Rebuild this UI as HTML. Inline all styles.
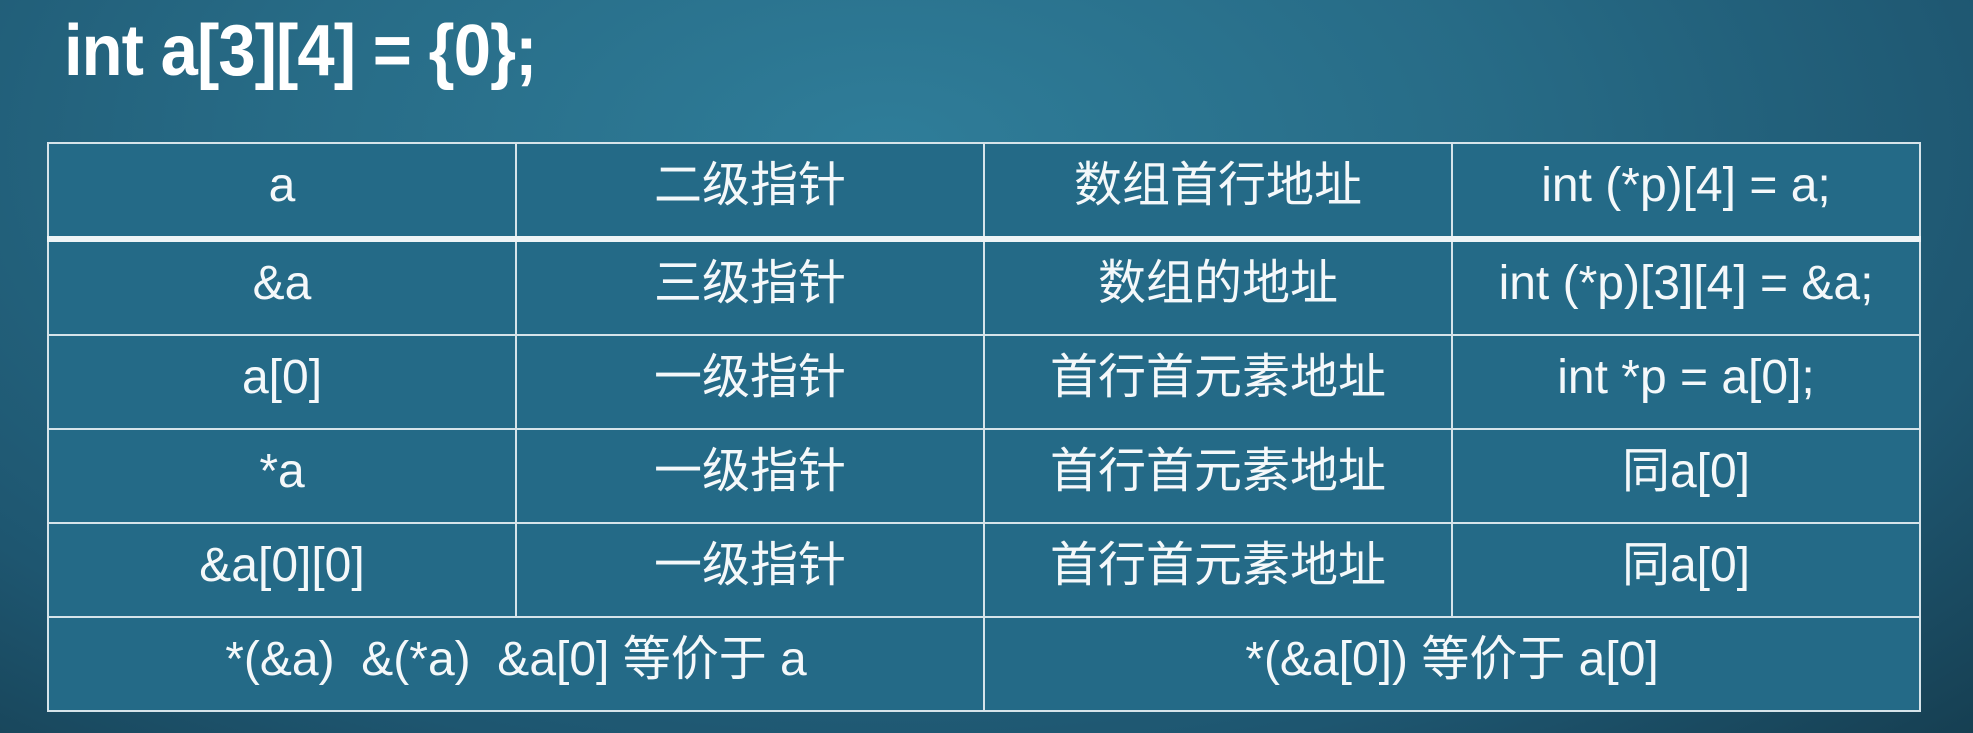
<!DOCTYPE html>
<html><head><meta charset="utf-8"><style>
html,body{margin:0;padding:0}
body{width:1973px;height:733px;overflow:hidden;position:relative;
background:radial-gradient(ellipse at 45% 20%,#2f7d99 0%,#276b86 40%,#1e5670 75%,#163f52 100%);
font-family:"Liberation Sans","Noto Sans CJK SC",sans-serif;color:#f4f8fa}
.title{position:absolute;left:64px;top:10px;font-family:"Liberation Sans",sans-serif;font-weight:bold;font-size:72px;color:#fff;letter-spacing:-1px;transform:scaleX(0.93);transform-origin:left top}
table{position:absolute;left:47px;top:142px;width:1872px;height:565px;border-collapse:collapse;background:#246a87;table-layout:fixed}
td{border:2px solid #d6e4ea;text-align:center;font-size:48px;padding:0 0 8px 0;height:84px;line-height:1}
tr.first td{border-bottom:6px solid #eef4f6}
</style></head><body>
<div class="title">int a[3][4] = {0};</div>
<table>
<colgroup><col style="width:468px"><col style="width:468px"><col style="width:468px"><col style="width:468px"></colgroup>
<tr class="first"><td>a</td><td>二级指针</td><td>数组首行地址</td><td>int (*p)[4] = a;</td></tr>
<tr><td>&amp;a</td><td>三级指针</td><td>数组的地址</td><td>int (*p)[3][4] = &amp;a;</td></tr>
<tr><td>a[0]</td><td>一级指针</td><td>首行首元素地址</td><td>int *p = a[0];</td></tr>
<tr><td>*a</td><td>一级指针</td><td>首行首元素地址</td><td>同a[0]</td></tr>
<tr><td>&amp;a[0][0]</td><td>一级指针</td><td>首行首元素地址</td><td>同a[0]</td></tr>
<tr><td colspan="2">*(&amp;a)&nbsp; &amp;(*a)&nbsp; &amp;a[0] 等价于 a</td><td colspan="2">*(&amp;a[0]) 等价于 a[0]</td></tr>
</table>
</body></html>
